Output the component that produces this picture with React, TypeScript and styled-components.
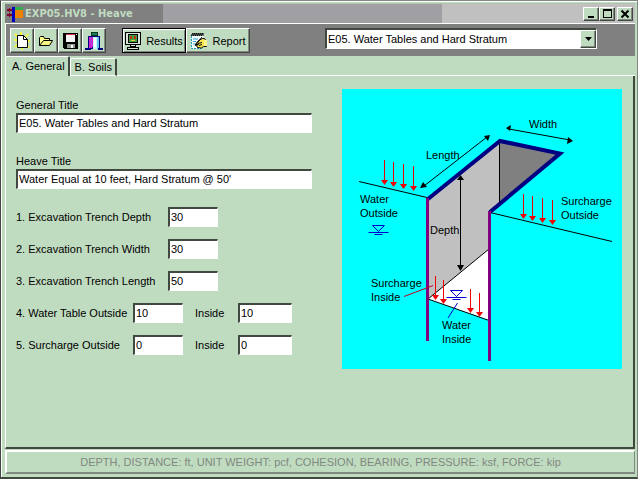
import React, { useState } from "react";
import styled, { createGlobalStyle, css } from "styled-components";

const GREEN = "#c0dcc0";
const INK = "#404840";
const SHADE = "#808880";

const GlobalStyle = createGlobalStyle`
  *, *::before, *::after { box-sizing: border-box; }
  body {
    margin: 0;
    background: ${GREEN};
    color: #000;
    font-family: "Liberation Sans", Arial, sans-serif;
    font-size: 11px;
    line-height: 16px;
  }
  button, input, select { font: inherit; color: inherit; }
  svg { flex-shrink: 0; }
`;

const sunken = css`
  border: 1px solid #fff;
  border-top: 2px solid ${INK};
  border-left: 2px solid ${INK};
`;

const raised = css`
  border: 1px solid;
  border-color: #fff ${INK} ${INK} #fff;
  box-shadow: inset -1px -1px 0 ${SHADE};
`;

const Window = styled.main`
  display: flex;
  flex-direction: column;
  min-height: 100vh;
  padding: 2px 1px 1px 2px;
  background: ${GREEN};
  border: 1px solid ${SHADE};
  border-left-color: ${INK};
  border-bottom: 2px solid ${INK};
  box-shadow: inset 1px 1px 0 #fff;
`;

const TitleBar = styled.header`
  display: flex;
  align-items: center;
  height: 20px;
  margin: 0 1px 0 2px;
  padding: 0 2px 0 1px;
  background: linear-gradient(90deg, #808080 0 158px, #a0a0a4 158px 437px, #c0c0c0 437px);
  border-top: 1px solid #b4c4b4;
`;

const Title = styled.h1`
  flex: 1;
  margin: 0 0 0 2px;
  color: ${GREEN};
  font: bold 11px/14px "DejaVu Sans Condensed", "DejaVu Sans", sans-serif;
  white-space: nowrap;
`;

const CaptionButton = styled.button<{ $apart?: boolean }>`
  display: grid;
  place-items: center;
  width: 16px;
  height: 14px;
  padding: 0;
  margin-left: ${(p) => (p.$apart ? 2 : 0)}px;
  background: ${GREEN};
  ${raised}
`;

const Toolbar = styled.div`
  display: flex;
  align-items: flex-start;
  height: 33px;
  padding: 4px 38px 0 4px;
  margin: 0 1px 0 2px;
  background: #808080;
  border-top: 1px solid #fff;
  border-left: 1px solid #fff;
`;

const ButtonGroup = styled.div`
  display: flex;
  margin-right: 16px;
`;

const ToolButton = styled.button<{ $wide?: boolean; $focus?: boolean }>`
  display: flex;
  align-items: center;
  justify-content: center;
  gap: 5px;
  width: ${(p) => (p.$wide ? 64 : 24)}px;
  height: 25px;
  padding: 0;
  background: ${GREEN};
  ${raised}
  ${(p) => p.$focus && css`border-color: #000; box-shadow: inset 1px 1px 0 #fff, inset -1px -1px 0 ${SHADE};`}
`;

const Picker = styled.div`
  display: flex;
  flex: 0 1 272px;
  position: relative;
  margin-left: auto;
  height: 21px;
`;

const PickerSelect = styled.select`
  flex: 1;
  min-width: 0;
  padding: 0 18px 1px 1px;
  appearance: none;
  background: #fff;
  border-radius: 0;
  outline: none;
  ${sunken}
`;

const PickerArrow = styled.span`
  position: absolute;
  top: 2px;
  right: 1px;
  bottom: 1px;
  width: 16px;
  display: grid;
  place-items: center;
  background: ${GREEN};
  pointer-events: none;
  ${raised}
`;

const Tabs = styled.div`
  display: flex;
  align-items: flex-end;
  height: 20px;
  margin-left: 2px;
`;

const Tab = styled.button<{ $active: boolean }>`
  height: ${(p) => (p.$active ? 20 : 18)}px;
  padding: 0 3px 1px ${(p) => (p.$active ? 6 : 4)}px;
  background: ${GREEN};
  border: 1px solid #fff;
  border-right: 2px solid ${INK};
  border-bottom: ${(p) => (p.$active ? "0" : "1px solid #fff")};
  border-radius: 2px 2px 0 0;
  white-space: nowrap;
`;

const TabFiller = styled.div`
  flex: 1;
  height: 1px;
  margin-right: 1px;
  background: #fff;
`;

const Page = styled.section`
  display: flex;
  flex: 1;
  flex-wrap: wrap;
  justify-content: space-between;
  align-items: flex-start;
  margin: 0 1px 0 2px;
  padding: 13px 11px 12px 10px;
  border-left: 1px solid #fff;
  border-right: 2px solid ${INK};
  border-bottom: 2px solid ${INK};
`;

const Form = styled.form`
  display: flex;
  flex-direction: column;
  gap: 12px;
  width: 296px;
  padding-top: 8px;
`;

const TitleFields = styled.div`
  display: flex;
  flex-direction: column;
  gap: 20px;
`;

const TitleField = styled.div`
  display: flex;
  flex-direction: column;
`;

const Rows = styled.div`
  display: flex;
  flex-direction: column;
`;

const Row = styled.div`
  display: flex;
  align-items: center;
  height: 32px;
`;

const RowLabel = styled.label<{ $width: number }>`
  flex: 0 0 ${(p) => p.$width}px;
  white-space: nowrap;
`;

const InsideLabel = styled.label`
  width: 43px;
  margin-left: 12px;
`;

const TextBox = styled.input<{ $width?: number }>`
  width: ${(p) => (p.$width ? `${p.$width}px` : "100%")};
  height: 20px;
  padding: 0 1px 1px 1px;
  background: #fff;
  border-radius: 0;
  outline: none;
  ${sunken}
`;

const Diagram = styled.svg`
  display: block;
  width: 280px;
  height: 280px;
  background: #00ffff;
  font-size: 11px;
`;

const StatusBar = styled.footer`
  height: 24px;
  margin: 1px 1px 2px 2px;
  line-height: 20px;
  text-align: center;
  color: ${SHADE};
  white-space: nowrap;
  overflow: hidden;
  border: 2px solid #fff;
  border-right: 1px solid ${SHADE};
  border-bottom: 2px solid ${SHADE};
`;

const AppIcon = () => (
  <svg width="17" height="16" viewBox="0 0 17 16" shapeRendering="crispEdges" aria-hidden="true">
    <path d="M9 1h8v3H9z" fill="#30b048" />
    <path d="M9 4h8v8H9z" fill="#f08000" />
    <path d="M6 1h3v15H6z" fill="#0000c0" />
    <path d="M1 3h4v2H1zM1 8h4v2H1z" fill="#800020" />
    <path d="M3 2l4 2-4 2zM3 7l4 2-4 2z" fill="#800020" />
  </svg>
);

const NewIcon = () => (
  <svg width="18" height="18" viewBox="0 0 18 18" aria-hidden="true">
    <path d="M2 2l3 3M1 8h3M2 15l3-3M8 0v4M15 2l-3 4M17 9h-4M16 16l-3-4M9 18v-3" stroke="#f4f440" strokeWidth="2" />
    <path d="M4.500 3.500h6l4 4v8h-10z" fill="#fff" stroke="#000" />
    <path d="M10.500 3.500v4h4" fill="none" stroke="#000" />
  </svg>
);

const OpenIcon = () => (
  <svg width="16" height="16" viewBox="0 0 16 16" aria-hidden="true">
    <path d="M1.500 12.500v-8l1-1h3l1 2h5v3" fill="#ffff90" stroke="#000" />
    <path d="M1.500 12.500l4-5h9l-3 5z" fill="#f4f480" stroke="#000" />
  </svg>
);

const SaveIcon = () => (
  <svg width="16" height="16" viewBox="0 0 16 16" shapeRendering="crispEdges" aria-hidden="true">
    <path d="M1 0h15v16H2l-1-1z" fill="#000" />
    <path d="M4 1h9v8H4z" fill="#f4f4f4" />
    <path d="M4 1h9v1H4z" fill="#d03040" />
    <path d="M5 11h8v4H5z" fill="#909890" />
    <path d="M9 12h2v3H9z" fill="#fff" />
    <path d="M14 1h1v1h-1z" fill="#fff" />
  </svg>
);

const ExitIcon = () => (
  <svg width="18" height="20" viewBox="0 0 18 20" shapeRendering="crispEdges" aria-hidden="true">
    <path d="M6 1h6v3H6z" fill="#208050" stroke="#003820" />
    <path d="M3 5h12v13H3z" fill="#000080" />
    <path d="M4 6h4v10l-4 2z" fill="#d020d0" />
    <path d="M5 7h1v1H5zM6 9h1v1H6zM5 11h1v1H5zM6 13h1v1H6z" fill="#8060f0" />
    <path d="M8 6h6v12H8z" fill="#c8f8ff" />
    <path d="M9 7h2v9H9z" fill="#fff" />
    <path d="M12 6h2v12h-2z" fill="#60c8e8" />
    <path d="M0 18h6M13 18h5" stroke="#000080" strokeWidth="2" />
  </svg>
);

const ResultsIcon = () => (
  <svg width="16" height="18" viewBox="0 0 16 18" shapeRendering="crispEdges" aria-hidden="true">
    <path d="M0 0h16v13H0z" fill="#000" />
    <path d="M1 1h14v11H1z" fill="#d8e4d8" />
    <path d="M3 2h10v9H3z" fill="#000" />
    <path d="M4 3h8v7H4z" fill="#40a040" />
    <path d="M5 4h2v3H5zM9 4h2v3H9z" fill="#c03010" />
    <path d="M6 8h4v1H6z" fill="#e0d040" />
    <path d="M5 13h6v2H5zM2 15h12v3H2z" fill="#000" />
    <path d="M6 13h4v1H6zM3 16h10v1H3z" fill="#d8e4d8" />
  </svg>
);

const ReportIcon = () => (
  <svg width="17" height="18" viewBox="0 0 17 18" aria-hidden="true">
    <path d="M1.500 3v13.500h10L13.500 14V3z" fill="#f4ffff" />
    <path d="M1.500 4v12.500h10" fill="none" stroke="#20a0c0" strokeDasharray="2 1" />
    <path d="M1 4l2-3v3l2-3v3l2-3v3l2-3v3l2-3v3l2-3v3" fill="none" stroke="#000" />
    <path d="M3 7h5M3 9.500h3M3 12h3" stroke="#30a0d0" />
    <path d="M5.500 12.500l3-4 4-2h2l2 3v5h-3l-2 1.500-4-.5-1-2 2-1z" fill="#f8e850" stroke="#000" />
    <path d="M12 5L5 14M8 11.500l4-1M9 13.500l3-1" fill="none" stroke="#000" />
    <path d="M14 8h3v6h-3z" fill="#fff890" />
  </svg>
);

type Point = [number, number];

const DownArrow = ({ at, from }: { at: Point; from: number }) => (
  <g fill="#f00000">
    <path d={`M${at[0]} ${from}V${at[1] - 4}`} stroke="#f00000" />
    <path d={`M${at[0] - 3.5} ${at[1] - 5}h7l-3.500 5z`} />
  </g>
);

const WaterMark = ({ x, y }: { x: number; y: number }) => (
  <path
    d={`M${x - 6} ${y - 7}h12l-6 6zM${x - 10} ${y}h20M${x - 4} ${y + 2}h8`}
    fill="none"
    stroke="#0000d0"
  />
);

const leftLoads = [[384, 160, 185], [393, 162, 187], [403, 164, 189], [413, 166, 191]];
const rightLoads = [[523, 194, 219], [532, 196, 221], [542, 198, 223], [552, 200, 225]];
const innerLoads = [[435, 276, 300], [443, 280, 304], [470, 289, 313], [479, 293, 317]];

const TrenchDiagram = () => (
  <Diagram viewBox="342 89 280 280" role="img" aria-label="Excavation trench dimensions">
    <path d="M428 198L500 141V204L490 212V249L428 299z" fill="#c0c0c0" />
    <path d="M500 141L560 154L500 203z" fill="#808080" />
    <path d="M428 299L489 249V320z" fill="#fff" />
    <path d="M499.500 142V203" stroke="#000" />
    <path d="M428 299L489 249M428 299L489 320.500" stroke="#000" />
    <path d="M359 181.500L427 197.500M490 212.500L612 241.500" stroke="#000" />
    <path d="M428 199L500 141L560 153.500L490 212" fill="none" stroke="#000080" strokeWidth="4" />
    <path d="M427 198V341M489.500 211V361" stroke="#800080" strokeWidth="3" shapeRendering="crispEdges" />
    <path d="M424 186L487 137M509 129L570 140" stroke="#000" />
    <path d="M420 188l3-6 4 5zM490 135l-6 1 4 5zM506 128l5-3-1 6zM573 141l-5-4-1 7z" />
    <path d="M460.500 180V266" stroke="#000" />
    <path d="M457 180h7l-3.500-5zM457 265h7l-3.500 6z" />
    {[...leftLoads, ...rightLoads, ...innerLoads].map(([x, from, to]) => (
      <DownArrow key={`${x}-${to}`} at={[x + 0.5, to]} from={from} />
    ))}
    <path d="M404 296.500L433 285.500" stroke="#c00020" />
    <path d="M457.500 303L448 318" stroke="#0000d0" />
    <WaterMark x={378.500} y={232.500} />
    <WaterMark x={456.500} y={297.500} />
    <text x="426" y="159">Length</text>
    <text x="529" y="128">Width</text>
    <text x="360" y="203">Water</text>
    <text x="360" y="217">Outside</text>
    <text x="561" y="205">Surcharge</text>
    <text x="561" y="219">Outside</text>
    <text x="430" y="234">Depth</text>
    <text x="371" y="287">Surcharge</text>
    <text x="371" y="301">Inside</text>
    <text x="442" y="329">Water</text>
    <text x="442" y="343">Inside</text>
  </Diagram>
);

const dimensions = [
  { id: "depth", label: "1. Excavation Trench Depth", value: "30" },
  { id: "width", label: "2. Excavation Trench Width", value: "30" },
  { id: "length", label: "3. Excavation Trench Length", value: "50" },
];

const pairs = [
  { id: "water", label: "4. Water Table Outside", outside: "10", inside: "10" },
  { id: "surcharge", label: "5. Surcharge Outside", outside: "0", inside: "0" },
];

export default function App() {
  const [tab, setTab] = useState("general");
  return (
    <>
      <GlobalStyle />
      <Window>
        <TitleBar>
          <AppIcon />
          <Title>EXP05.HV8 - Heave</Title>
          <CaptionButton aria-label="Minimize">
            <svg width="10" height="10"><path d="M2 7h6v2H2z" /></svg>
          </CaptionButton>
          <CaptionButton aria-label="Maximize">
            <svg width="10" height="10" shapeRendering="crispEdges">
              <path d="M1 0h9v9H1zM2 2v6h7V2z" fillRule="evenodd" />
            </svg>
          </CaptionButton>
          <CaptionButton aria-label="Close" $apart>
            <svg width="10" height="10"><path d="M1.500 1.500l7 7M8.500 1.500l-7 7" stroke="#000" strokeWidth="2" /></svg>
          </CaptionButton>
        </TitleBar>
        <Toolbar>
          <ButtonGroup>
            <ToolButton aria-label="New"><NewIcon /></ToolButton>
            <ToolButton aria-label="Open"><OpenIcon /></ToolButton>
            <ToolButton aria-label="Save"><SaveIcon /></ToolButton>
            <ToolButton aria-label="Exit"><ExitIcon /></ToolButton>
          </ButtonGroup>
          <ButtonGroup>
            <ToolButton $wide $focus><ResultsIcon />Results</ToolButton>
            <ToolButton $wide><ReportIcon />Report</ToolButton>
          </ButtonGroup>
          <Picker>
            <PickerSelect aria-label="Example" defaultValue="E05">
              <option value="E05">E05. Water Tables and Hard Stratum</option>
            </PickerSelect>
            <PickerArrow>
              <svg width="7" height="4"><path d="M0 0h7L3.500 4z" /></svg>
            </PickerArrow>
          </Picker>
        </Toolbar>
        <Tabs role="tablist">
          <Tab role="tab" aria-selected={tab === "general"} $active={tab === "general"} onClick={() => setTab("general")}>
            A. General
          </Tab>
          <Tab role="tab" aria-selected={tab === "soils"} $active={tab === "soils"} onClick={() => setTab("soils")}>
            B. Soils
          </Tab>
          <TabFiller />
        </Tabs>
        <Page>
          <Form>
            <TitleFields>
              <TitleField>
                <label htmlFor="general-title">General Title</label>
                <TextBox id="general-title" defaultValue="E05. Water Tables and Hard Stratum" />
              </TitleField>
              <TitleField>
                <label htmlFor="heave-title">Heave Title</label>
                <TextBox id="heave-title" defaultValue="Water Equal at 10 feet, Hard Stratum @ 50'" />
              </TitleField>
            </TitleFields>
            <Rows>
              {dimensions.map((d) => (
                <Row key={d.id}>
                  <RowLabel htmlFor={d.id} $width={152}>{d.label}</RowLabel>
                  <TextBox id={d.id} $width={50} defaultValue={d.value} />
                </Row>
              ))}
              {pairs.map((p) => (
                <Row key={p.id}>
                  <RowLabel htmlFor={`${p.id}-out`} $width={117}>{p.label}</RowLabel>
                  <TextBox id={`${p.id}-out`} $width={50} defaultValue={p.outside} />
                  <InsideLabel htmlFor={`${p.id}-in`}>Inside</InsideLabel>
                  <TextBox id={`${p.id}-in`} $width={54} defaultValue={p.inside} />
                </Row>
              ))}
            </Rows>
          </Form>
          <TrenchDiagram />
        </Page>
        <StatusBar>DEPTH, DISTANCE: ft, UNIT WEIGHT: pcf, COHESION, BEARING, PRESSURE: ksf, FORCE: kip</StatusBar>
      </Window>
    </>
  );
}
